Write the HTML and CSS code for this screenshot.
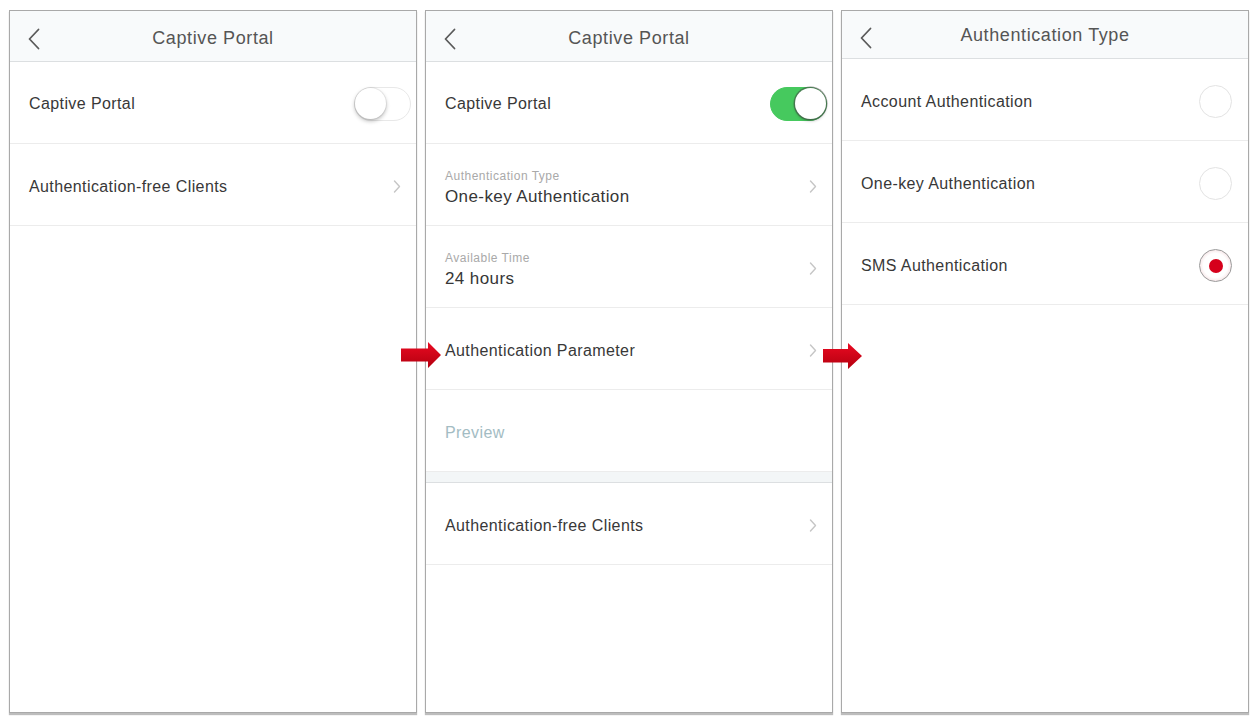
FILE: index.html
```html
<!DOCTYPE html>
<html lang="en">
<head>
<meta charset="utf-8">
<title>Captive Portal settings</title>
<link rel="stylesheet" href="styles.css">
</head>
<body>
<div class="stage">
  <!-- Screen 1: portal disabled -->
  <section class="screen">
    <header class="bar">
      <svg class="back" viewBox="0 0 14 22" width="14" height="22"><path d="M11.5 1.5 L2.5 11 L11.5 20.5" /></svg>
      <h1 class="title">Captive Portal</h1>
    </header>
    <div class="row row-switch">
      <span class="text">Captive Portal</span>
      <span class="switch"><span class="knob"></span></span>
    </div>
    <div class="row">
      <span class="text">Authentication-free Clients</span>
      <svg class="chev" viewBox="0 0 8 13" width="8" height="13"><path d="M1.5 1 L6.5 6.5 L1.5 12" /></svg>
    </div>
  </section>

  <!-- Screen 2: portal enabled -->
  <section class="screen">
    <header class="bar">
      <svg class="back" viewBox="0 0 14 22" width="14" height="22"><path d="M11.5 1.5 L2.5 11 L11.5 20.5" /></svg>
      <h1 class="title">Captive Portal</h1>
    </header>
    <div class="row row-switch">
      <span class="text">Captive Portal</span>
      <span class="switch on"><span class="knob"></span></span>
    </div>
    <div class="row">
      <div class="pair">
        <span class="label">Authentication Type</span>
        <span class="value">One-key Authentication</span>
      </div>
      <svg class="chev" viewBox="0 0 8 13" width="8" height="13"><path d="M1.5 1 L6.5 6.5 L1.5 12" /></svg>
    </div>
    <div class="row">
      <div class="pair">
        <span class="label">Available Time</span>
        <span class="value">24 hours</span>
      </div>
      <svg class="chev" viewBox="0 0 8 13" width="8" height="13"><path d="M1.5 1 L6.5 6.5 L1.5 12" /></svg>
    </div>
    <div class="row">
      <span class="text">Authentication Parameter</span>
      <svg class="chev" viewBox="0 0 8 13" width="8" height="13"><path d="M1.5 1 L6.5 6.5 L1.5 12" /></svg>
    </div>
    <div class="row">
      <span class="text link">Preview</span>
    </div>
    <div class="band"></div>
    <div class="row">
      <span class="text">Authentication-free Clients</span>
      <svg class="chev" viewBox="0 0 8 13" width="8" height="13"><path d="M1.5 1 L6.5 6.5 L1.5 12" /></svg>
    </div>
  </section>

  <!-- Screen 3: authentication type picker -->
  <section class="screen">
    <header class="bar bar-short">
      <svg class="back" viewBox="0 0 14 22" width="14" height="22"><path d="M11.5 1.5 L2.5 11 L11.5 20.5" /></svg>
      <h1 class="title">Authentication Type</h1>
    </header>
    <div class="row row-radio">
      <span class="text">Account Authentication</span>
      <span class="radio"></span>
    </div>
    <div class="row row-radio">
      <span class="text">One-key Authentication</span>
      <span class="radio"></span>
    </div>
    <div class="row row-radio">
      <span class="text">SMS Authentication</span>
      <span class="radio checked"></span>
    </div>
  </section>

  <!-- flow arrows between screens -->
  <svg class="arrow arrow-a" viewBox="0 0 40 26" width="40" height="26"><defs><linearGradient id="ga" x1="0" y1="0" x2="0" y2="1"><stop offset="0" stop-color="#ea0a22"/><stop offset="1" stop-color="#b3000f"/></linearGradient></defs><polygon points="0,6.5 27,6.5 27,0 40,13 27,26 27,19.5 0,19.5" fill="url(#ga)"/></svg>
  <svg class="arrow arrow-b" viewBox="0 0 39 26" width="39" height="26"><defs><linearGradient id="gb" x1="0" y1="0" x2="0" y2="1"><stop offset="0" stop-color="#ea0a22"/><stop offset="1" stop-color="#b3000f"/></linearGradient></defs><polygon points="0,6 25,6 25,0 39,13 25,26 25,19.5 0,19.5" fill="url(#gb)"/></svg>
</div>
</body>
</html>
```
FILE: styles.css
```css
* { box-sizing: border-box; }

html, body {
  margin: 0;
  background: #ffffff;
  font-family: "Liberation Sans", Arial, Helvetica, sans-serif;
  color: #3c3c3c;
}

.stage {
  position: relative;
  display: flex;
  gap: 8px;
  padding: 10px 0 0 9px;
  width: 1254px;
  height: 718px;
}

.screen {
  width: 408px;
  height: 703px;
  border: 1px solid #a9a9a9;
  box-shadow: 0 2px 1px #bdbdbd;
  background: #fff;
  display: flex;
  flex-direction: column;
}

/* navigation bar */
.bar {
  position: relative;
  height: 51px;
  flex: none;
  background: #f8fafb;
  border-bottom: 1px solid #dcdfe1;
  display: flex;
  align-items: center;
  justify-content: center;
  padding-top: 4px;
}
.bar-short { height: 48px; padding-top: 2px; }

.back {
  position: absolute;
  left: 17px;
  top: 17px;
  fill: none;
  stroke: #5a5a5a;
  stroke-width: 1.8;
  stroke-linecap: round;
  stroke-linejoin: round;
}
.bar-short .back { top: 16px; }

.title {
  margin: 0;
  font-size: 18px;
  font-weight: normal;
  letter-spacing: 0.6px;
  color: #555;
}

/* list rows */
.row {
  height: 82px;
  flex: none;
  border-bottom: 1px solid #ececec;
  display: flex;
  align-items: center;
  justify-content: space-between;
  padding: 4px 15px 0 19px;
}
.row-switch { padding-right: 5px; padding-top: 2px; }
.row-radio { padding-right: 16px; }

.text {
  font-size: 16px;
  letter-spacing: 0.4px;
  color: #383838;
}
.text.link { color: #a3bcc3; }

.pair {
  display: flex;
  flex-direction: column;
  padding-top: 4px;
}
.label {
  font-size: 12px;
  line-height: 16px;
  letter-spacing: 0.5px;
  color: #a9a9a9;
}
.value {
  margin-top: 1px;
  font-size: 17px;
  line-height: 24px;
  letter-spacing: 0.4px;
  color: #363636;
}

.chev {
  fill: none;
  stroke: #c6c6c6;
  stroke-width: 1.4;
  stroke-linecap: round;
  stroke-linejoin: round;
}

.band {
  height: 11px;
  flex: none;
  background: #f3f6f7;
  border-bottom: 1px solid #dcdfe1;
}

/* toggle switch */
.switch {
  position: relative;
  width: 57px;
  height: 34px;
  border-radius: 17px;
  border: 1.5px solid #e8e8e8;
  background: #fff;
}
.switch .knob {
  position: absolute;
  left: 0;
  top: 0;
  width: 31px;
  height: 31px;
  border-radius: 50%;
  background: #fff;
  box-shadow: 0 0 0 1px rgba(0, 0, 0, 0.06), 0 2px 4px rgba(0, 0, 0, 0.28);
}
.switch.on {
  background: #46c95e;
  border-color: #46c95e;
}
.switch.on .knob {
  left: auto;
  right: 0;
  box-shadow: 0 0 0 1.5px rgba(70, 70, 70, 0.55), 0 2px 3px rgba(0, 0, 0, 0.25);
}

/* radio buttons */
.radio {
  width: 33px;
  height: 33px;
  border-radius: 50%;
  border: 1.5px solid #e3e3e3;
  display: flex;
  align-items: center;
  justify-content: center;
}
.radio.checked {
  border-color: #9a9a9a;
  background: radial-gradient(circle, #fff 0 55%, #f6e4e6 75%, #fff 100%);
}
.radio.checked::after {
  content: "";
  width: 14px;
  height: 14px;
  border-radius: 50%;
  background: #d6001b;
}

/* flow arrows laid over the screen edges */
.arrow { position: absolute; }
.arrow-a { left: 401px; top: 342px; }
.arrow-b { left: 823px; top: 343px; }
```
